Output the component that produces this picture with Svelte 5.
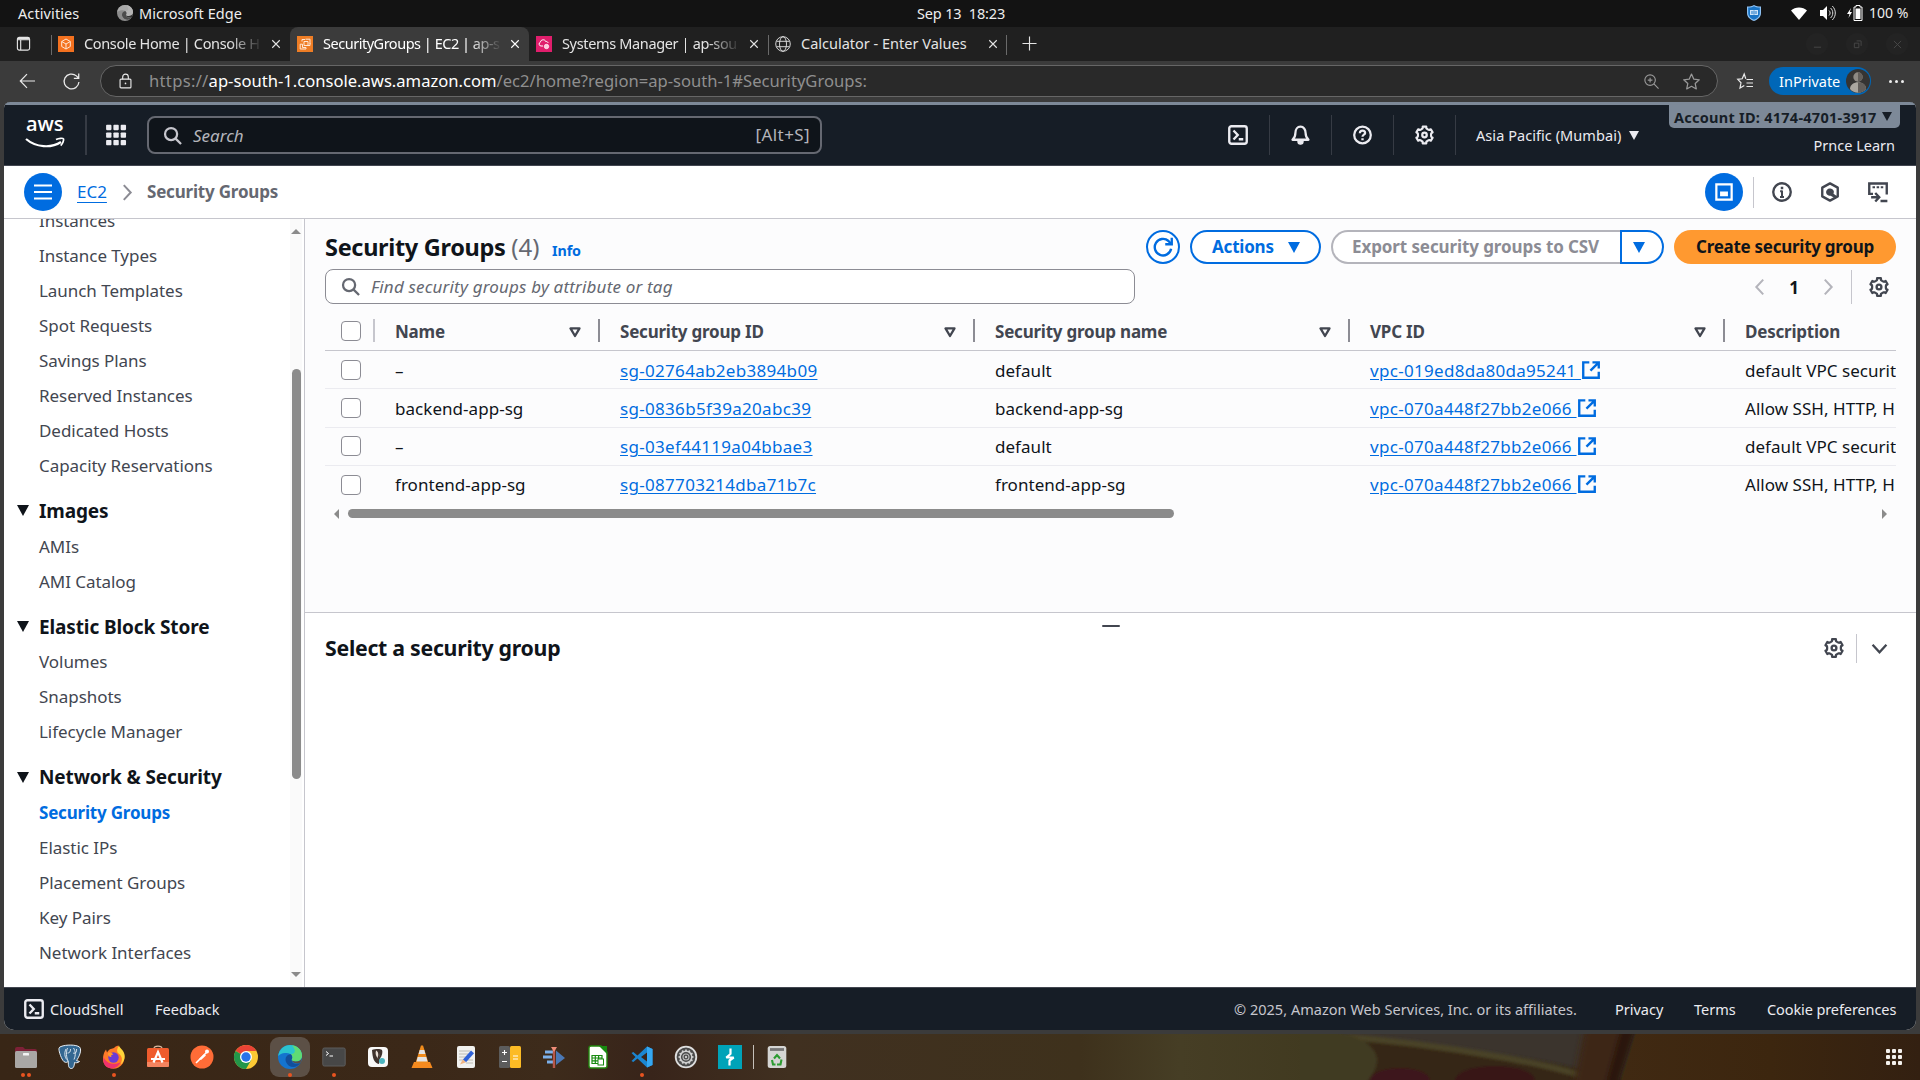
<script>
  const tabs = [
    { kind: 'home', title: 'Console Home | Console H', active: false },
    { kind: 'ec2', title: 'SecurityGroups | EC2 | ap-s', active: true },
    { kind: 'ssm', title: 'Systems Manager | ap-sou', active: false },
    { kind: 'globe', title: 'Calculator - Enter Values', active: false }
  ];
  const nav = [
    { items: ['Instances', 'Instance Types', 'Launch Templates', 'Spot Requests', 'Savings Plans', 'Reserved Instances', 'Dedicated Hosts', 'Capacity Reservations'] },
    { title: 'Images', items: ['AMIs', 'AMI Catalog'] },
    { title: 'Elastic Block Store', items: ['Volumes', 'Snapshots', 'Lifecycle Manager'] },
    { title: 'Network & Security', items: ['Security Groups', 'Elastic IPs', 'Placement Groups', 'Key Pairs', 'Network Interfaces'] }
  ];
  const columns = ['Name', 'Security group ID', 'Security group name', 'VPC ID', 'Description'];
  const rows = [
    { name: '–', id: 'sg-02764ab2eb3894b09', group: 'default', vpc: 'vpc-019ed8da80da95241', desc: 'default VPC securit' },
    { name: 'backend-app-sg', id: 'sg-0836b5f39a20abc39', group: 'backend-app-sg', vpc: 'vpc-070a448f27bb2e066', desc: 'Allow SSH, HTTP, H' },
    { name: '–', id: 'sg-03ef44119a04bbae3', group: 'default', vpc: 'vpc-070a448f27bb2e066', desc: 'default VPC securit' },
    { name: 'frontend-app-sg', id: 'sg-087703214dba71b7c', group: 'frontend-app-sg', vpc: 'vpc-070a448f27bb2e066', desc: 'Allow SSH, HTTP, H' }
  ];
  const dock = [
    { app: 'files', dots: 2 }, { app: 'postgres', dots: 0 }, { app: 'firefox', dots: 1 }, { app: 'software', dots: 0 },
    { app: 'postman', dots: 0 }, { app: 'chrome', dots: 0 }, { app: 'edge', dots: 1 }, { app: 'terminal', dots: 1 },
    { app: 'dbeaver', dots: 0 }, { app: 'vlc', dots: 0 }, { app: 'editor', dots: 0 }, { app: 'calculator', dots: 0 },
    { app: 'umbrello', dots: 0 }, { app: 'calc', dots: 0 }, { app: 'vscode', dots: 1 }, { app: 'settings', dots: 0 }, { app: 'burp', dots: 0 }
  ];

  // Outline of a six-toothed gear in a 16-unit box.
  function gearPoints() {
    const pts = [];
    for (let i = 0; i < 6; i++) {
      const base = i * 60 - 90;
      for (const [off, r] of [[-27, 5.5], [-16, 5.8], [-12, 7.2], [12, 7.2], [16, 5.8], [27, 5.5]]) {
        const a = ((base + off) * Math.PI) / 180;
        pts.push(`${(8 + r * Math.cos(a)).toFixed(2)},${(8 + r * Math.sin(a)).toFixed(2)}`);
      }
    }
    return pts.join(' ');
  }
  const gear = gearPoints();
  const teeth = Array.from({ length: 12 }, (_, i) => i * 30);
</script>

{#snippet icon(name)}
  <svg class="icon" viewBox="0 0 16 16" fill="none" stroke="currentColor" stroke-width="1.9">
    {#if name === 'search'}
      <circle cx="6.8" cy="6.8" r="5.1" /><path d="M10.6 10.6 15.2 15.2" />
    {:else if name === 'shell'}
      <rect x="1" y="1" width="14" height="14" rx="1.8" /><path d="M4.4 4.4 7.8 8 4.4 11.6M8.6 11.4h3.6" />
    {:else if name === 'bell'}
      <path d="M1.300 12h13.400c-1.900-1.500-2.400-2.600-2.400-5.600C12.300 3.300 10.500 1 8 1S3.700 3.300 3.700 6.400C3.700 9.400 3.200 10.500 1.300 12Z" stroke-linejoin="round" /><path d="M5.800 13.500a2.200 2.200 0 0 0 4.400 0Z" fill="currentColor" stroke-width="1" />
    {:else if name === 'help'}
      <circle cx="8" cy="8" r="7" /><path d="M5.800 6.500C5.800 5.100 6.700 4.300 8 4.300s2.200.8 2.200 2C10.200 7.800 8 7.700 8 9.500" /><path d="M7 10.700h2v1.800H7z" fill="currentColor" stroke="none" />
    {:else if name === 'gear'}
      <polygon points={gear} stroke-linejoin="round" stroke-width="1.800" /><circle cx="8" cy="8" r="1.900" />
    {:else if name === 'info'}
      <circle cx="8" cy="8" r="7" /><path d="M8 6.800v5.200M6.500 7.400H8M6.400 11.900h3.200" stroke-width="1.600" /><path d="M7 3.700h2v2H7z" fill="currentColor" stroke="none" />
    {:else if name === 'hex'}
      <path d="M8 1.100 14.200 4.500v7L8 14.900 1.800 11.500v-7Z" stroke-linejoin="round" /><path d="M7.900 5.200a2.900 2.900 0 1 0 .6 5.700l4 2.300 1.200-1.800-2.900-2A2.900 2.900 0 0 0 7.900 5.200Z" fill="currentColor" stroke="none" />
    {:else if name === 'panel'}
      <path d="M1.200 1.200h13.600v13.600H1.200z" stroke-width="2" /><path d="M4.500 7.500h7v4.300h-7z" fill="currentColor" stroke="none" />
    {:else if name === 'tutorial'}
      <path d="M4 9.500H1V1.200h14V10" /><path d="M3.600 4.200h2M6.900 4.200h2M10.200 4.200h2" stroke-width="1.600" /><path d="M2.500 12.200h6M5.800 8.800 9 12.200 5.800 15.600M10 15.200h5.500" />
    {:else if name === 'menu'}
      <path d="M0 2.200h16M0 8h16M0 13.800h16" />
    {:else if name === 'refresh'}
      <path d="M14.500 9.400A6.600 6.600 0 1 1 12.400 3.200L14.500 5.500" /><path d="M9.800 5.800H15V.6" />
    {:else if name === 'external'}
      <path d="M6.500 1.200H1.100v13.700h13.800V9.500M9.300 1.200h5.600v5.500M14.500 1.600 7.500 8.600" stroke-width="2.100" />
    {:else if name === 'left'}
      <path d="M11.500 1 5 8l6.500 7" />
    {:else if name === 'right'}
      <path d="M4.500 1 11 8l-6.500 7" />
    {:else if name === 'down'}
      <path d="M1.500 4.500 8 11.500l6.500-7" stroke-width="2.200" />
    {:else if name === 'apps'}
      {#each [0.8, 6.1, 11.4] as x}{#each [0.6, 6.1, 11.6] as y}<rect {x} {y} width="3.900" height="3.900" rx=".6" fill="currentColor" stroke="none" />{/each}{/each}
    {/if}
  </svg>
{/snippet}

{#snippet chrome(name)}
  <svg class="icon" viewBox="0 0 16 16" fill="none" stroke="currentColor" stroke-width="1.2">
    {#if name === 'back'}<path d="M15.500 8H1M7.500 1.200.8 8l6.700 6.800" />
    {:else if name === 'reload'}<path d="M15 8.500A7 7 0 1 1 12.600 2.700L14.800 5M14.800.5V5h-4.600" />
    {:else if name === 'lock'}<rect x="2.200" y="6" width="11.600" height="9.300" rx="1" /><path d="M5 6V3.700a3 3 0 0 1 6 0V6" /><circle cx="8" cy="10.600" r=".9" fill="currentColor" stroke="none" />
    {:else if name === 'zoom'}<circle cx="6.500" cy="6.500" r="5.600" /><path d="M10.600 10.600 15.500 15.500M4 6.500h5M6.500 4v5" />
    {:else if name === 'star'}<path d="m8 1 2.200 4.800 5.100.6-3.800 3.500 1 5.100L8 12.500 3.500 15l1-5.100L.7 6.400l5.100-.6Z" stroke-linejoin="round" />
    {:else if name === 'favs'}<path d="M8.800 5.800 7.200 1 5.200 5.800.7 6.300 4 9.800 3 15l4.300-2.600M9.500 6.500H16M9.500 10H16M9.500 13.500H16" />
    {:else if name === 'workspace'}<rect x="1.500" y="1.500" width="13" height="13.500" rx="2" /><path d="M1.500 4h13M5 4v11" /><path d="M2 2.700h12" stroke-width="2" />
    {:else if name === 'close'}<path d="m2 2 12 12M14 2 2 14" stroke-width="1.800" />
    {:else if name === 'plus'}<path d="M8 .5v15M.5 8h15" />
    {:else if name === 'home'}<rect width="16" height="16" fill="#f4711f" stroke="none" /><path d="m8 3 4.300 2.500v5L8 13l-4.300-2.500v-5ZM3.700 5.500 8 8l4.300-2.500M8 8v5" stroke="#ffe6d4" stroke-width="1" />
    {:else if name === 'ec2'}<rect width="16" height="16" fill="#ee7d25" stroke="none" /><path d="M8.500 3.200H13v4.500M7 5.500h4v4H7zM5 5.500v-2h3M3.200 8.200h2.300v3.300h3.500V13H3.200zM11 9.500h2V7" stroke="#ffe8d6" stroke-width="1" />
    {:else if name === 'ssm'}<rect width="16" height="16" fill="#e01e6c" stroke="none" /><path d="M7 10H5a2 2 0 0 1-.5-3.900C4.500 3.500 9 2.800 9.700 5.500 11 5.300 12 6 12 7" stroke="#fff" stroke-width="1" /><circle cx="10.500" cy="10.500" r="2.200" fill="#ffc5dc" stroke="#fff" stroke-width=".7" />
    {:else if name === 'globe'}<g stroke-width=".9"><circle cx="8" cy="8" r="7.300" /><ellipse cx="8" cy="8" rx="3.500" ry="7.300" /><path d="M1.500 5.300h13M1.500 10.700h13" /></g>
    {/if}
  </svg>
{/snippet}

{#snippet edgeLogo(mono)}
  <svg class="icon" viewBox="0 0 24 24">
    <circle cx="12" cy="12" r="12" fill={mono ? '#8c8c8c' : '#1474cf'} />
    <path d="M.2 11C1 4.500 6 0 12 0c7 0 12 5 12 10.500 0 4-3 6-6.300 6-2.500 0-4.200-1-4-2 .7-1 .8-1.500.5-2.800C13.500 8.500 10 7.500 7 8 4 8.200 1.500 9.500.2 11Z" fill={mono ? '#aaa' : '#2bc3cf'} />
    <path d="M14 .2C20 1 24 5.500 24 10.500c0 4-3 6-6.300 6-2.500 0-4.200-1-4-2 1.300-2 .8-4-1-5.500 3 0 7-2 1.300-8.800Z" fill={mono ? '#b5b5b5' : '#5fdb74'} />
    <path d="M13 9.300C9 9 6.500 13 8 17c1.200 3 4 5 7.500 5 2.500 0 5-1.500 7-4-4 1.500-9 .8-9-3.500.9-1.200 1.200-3.200-.5-5.200Z" fill={mono ? '#4c4c4c' : '#124f9c'} />
    <path d="M24 12.500c-1 3-3.500 4-6.300 4-2.500 0-4.200-1-4-2 0 3 3.300 4.700 8.800 3.500Z" fill={mono ? '#333' : '#5a4e45'} />
  </svg>
{/snippet}

{#snippet appIcon(name)}
  {#if name === 'edge'}
    {@render edgeLogo(false)}
  {:else}
    <svg class="icon" viewBox="0 0 24 24">
      {#if name === 'files'}
        <path d="M1 4a2 2 0 0 1 2-2h6l2 2h10a2 2 0 0 1 2 2v5H1Z" fill="#7d2137" /><rect x="1" y="6" width="22" height="17" rx="1.500" fill="#a9a7a5" /><rect x="9" y="8" width="6" height="2.500" rx=".5" fill="#f4f4f4" />
      {:else if name === 'postgres'}
        <path d="M3 1.500C8-.5 18-.5 21.500 2c3 3-1 11-3 13.500l3 1c-1.500 1.500-4 1.500-5 1-.3 4-1 6-3.500 6-2.500-.3-2.700-3-2.700-7-2 1.500-4 1-5.300-1C2.500 12 .5 5 1 3.300c.2-1 1-1.500 2-1.800Z" fill="#336791" stroke="#e8eef4" stroke-width="1" /><path d="M9.500 3C8 7 8 12 10.300 16.500M15.500 3c2 3 2.500 7 .5 11.500M8 4c-2.500 5-.5 10 1.500 11M9.500 8c2 0 3-1 3-4M15 8c2 1 4-.5 3.500-4" fill="none" stroke="#e8eef4" stroke-width=".9" />
      {:else if name === 'firefox'}
        <path d="M12 3c1-1 2-2 4.500-2.500-.5 2.500 2 4 4 6 2.500 3 2.500 8.500.3 12C16 26 5 25 1.800 18 .5 15 .6 9 4 4.500l1 3C8 3 10 4 12 3Z" fill="#ff7a29" /><path d="M17 .5c0 2 4.500 4 5.500 9 .8 4-1 8-4 10 3-6 1-9-3-12-1-2 0-5 1.500-7Z" fill="#ffd43a" /><path d="M1.500 12c2 5 8 9 17 5.500C14 26 4 24.500 1.800 18c-.6-2-.6-4-.3-6Z" fill="#f0326d" /><circle cx="11.500" cy="12.500" r="5.200" fill="#6b3bd6" /><path d="M6 8c2-1 4 0 5.500 1.500-2 0-3 1-2 2.500-2 0-4-1.500-3.500-4Z" fill="#ff9a2c" />
      {:else if name === 'software'}
        <path d="M8 3.500C8 .2 16 .2 16 3.500" fill="none" stroke="#d9b9a0" stroke-width="1.200" /><rect x="1" y="3" width="22" height="19" rx="1.500" fill="#ef5c2d" /><path d="M1 17h22v3.500a1.500 1.500 0 0 1-1.500 1.500h-19A1.500 1.500 0 0 1 1 20.500Z" fill="#f4845f" /><path d="M7.500 17.500 12 7l4.500 10.500M5 14h14" fill="none" stroke="#fff" stroke-width="2.200" />
      {:else if name === 'postman'}
        <circle cx="12" cy="12" r="11.500" fill="#ff6c37" /><path d="M6 18l9-9M12.500 11.500 17 7" stroke="#fff" stroke-width="1.600" /><circle cx="17" cy="6.500" r="2" fill="#fff" /><path d="m9 14 5-5 2 1.500-5 4.500Z" fill="#fff" />
      {:else if name === 'chrome'}
        <circle cx="12" cy="12" r="12" fill="#fcc934" /><path d="M12 12 1.600 6A12 12 0 0 1 22.400 6H12Z" fill="#ea4335" /><path d="M12 12 1.600 6A12 12 0 0 0 12 24l5.200-9Z" fill="#23964a" /><circle cx="12" cy="12" r="6" fill="#fff" /><circle cx="12" cy="12" r="4.700" fill="#2873e8" />
      {:else if name === 'terminal'}
        <rect x=".8" y="3" width="22.400" height="18" rx="1.500" fill="#474747" stroke="#5d5d5d" /><path d="m4 6.500 2.500 2L4 10.500M7.500 11h3.500" stroke="#fff" stroke-width="1" fill="none" />
      {:else if name === 'dbeaver'}
        <rect x="2" y="2" width="20" height="20" rx="4" fill="#f8f8f8" /><path d="M6 5c3-1 8-1.500 10 0 1 2 0 6-2 8.500l-1 5.500c-5-1-6.500-6-7-14Z" fill="#40332e" /><path d="M10 5.500c-1 3 0 6 2 8C14.500 11 14 7 10 5.500Z" fill="#e8ded5" /><path d="M11.500 5c1.500 2 2 5 .8 8" fill="none" stroke="#40332e" stroke-width="1.500" /><circle cx="16" cy="16" r="3" fill="#4bb5c0" />
      {:else if name === 'vlc'}
        <path d="M4 17h16l2.500 6h-21Z" fill="#f58a1f" /><path d="M11 .5h2L18.500 18h-13Z" fill="#f08c1d" /><path d="M9.700 5h4.600l1.100 4H8.600ZM7.700 12h8.600l1.200 4.500h-11Z" fill="#e4e4e4" />
      {:else if name === 'editor'}
        <rect x="3" y="1" width="18" height="22" rx="2" fill="#f1f1ef" /><path d="M5 6h11M5 9h9M5 12h8M5 15h14M12 18h7" stroke="#b9b8ae" stroke-width=".9" /><path d="m9 14.500 8-9 3 2.800-8 9Z" fill="#2f62d8" /><path d="m8.800 14.500 3.200 2.800-6 2.200Z" fill="#f0b483" />
      {:else if name === 'calculator'}
        <rect x="1" y="1" width="11" height="22" rx="1.500" fill="#5c5c5c" /><rect x="12" y="1" width="11" height="22" rx="1.500" fill="#fcbb25" /><path d="M4 7.500h5M6.500 5v5M4 16.500h5M15 11h5M15 14h5" stroke="#fff" stroke-width="1.100" />
      {:else if name === 'umbrello'}
        <path d="M3 7h9M1 12h9M5 17h7" stroke="#7cb0ea" stroke-width="3.200" /><path d="M14 5.500 23 13l-9 7Z" fill="#4b78b5" /><path d="M12 3v20" stroke="#b7574a" stroke-width="2.400" /><path d="M9 2h6l-3 5Z" fill="#ef8d79" />
      {:else if name === 'calc'}
        <path d="M5 1h10l6 6v14a2 2 0 0 1-2 2H5a2 2 0 0 1-2-2V3a2 2 0 0 1 2-2Z" fill="#fff" stroke="#22860e" stroke-width="1.400" /><path d="M13 1h8v8Z" fill="#188a10" /><path d="M6 10.500h10v8H6zM6 13h10M6 15.800h10M9.300 10.500v8M12.600 10.500v8" fill="none" stroke="#188a10" stroke-width="1.200" /><rect x="12" y="14" width="5.500" height="6" fill="#fff" stroke="#188a10" />
      {:else if name === 'vscode'}
        <path d="M17 1.500 22.500 4v16L17 22.500 7.500 13.500 3.300 17 1.500 16l4-4-4-4 1.800-1 4.200 3.500ZM17 7.500 11 12l6 4.500Z" fill="#1b86d1" fill-rule="evenodd" /><path d="M17 1.500 22.500 4v16L17 22.500Z" fill="#35a7f1" />
      {:else if name === 'settings'}
        <circle cx="12" cy="12" r="10.300" fill="#4a4a4a" stroke="#dedede" stroke-width="1.800" /><circle cx="12" cy="12" r="5.800" fill="none" stroke="#d0d0d0" stroke-width="1.500" />
        {#each teeth as angle}<path d="M12 4.500v2" stroke="#d0d0d0" stroke-width="1.700" transform="rotate({angle} 12 12)" />{/each}
        <circle cx="12" cy="12" r="3" fill="none" stroke="#b8b8b8" stroke-width="1.100" /><circle cx="12" cy="12" r="1.200" fill="#c8c8c8" />
      {:else if name === 'burp'}
        <path d="M0 0h24v24H0z" fill="#00a3b8" /><path d="M12.500 3.500v5.500L8.300 12.500h7.400L11.500 15.500v5" fill="none" stroke="#fff" stroke-width="2.200" stroke-linejoin="bevel" />
      {:else if name === 'trash'}
        <rect x="2.700" y="1" width="18.600" height="22" rx="2.500" fill="#d5d5d3" /><path d="M5 4.500h14" stroke="#757575" stroke-width="2.800" /><path d="m9 13.500 3-3.500 3 3.500M16.500 14.500l-1 5h-3.500M10.500 19.500H8l-1-4.500" fill="none" stroke="#2c9b31" stroke-width="2.100" />
      {/if}
    </svg>
  {/if}
{/snippet}

<div class="desktop">
  <div class="gnome">
    <span class="activities">Activities</span>
    <span class="edge-mini">{@render edgeLogo(true)}</span>
    <span class="app-name">Microsoft Edge</span>
    <span class="clock">Sep 13&nbsp; 18:23</span>
    <div class="tray">
      <svg class="shield" viewBox="0 0 14 16"><path d="M0 1.500C3 1.500 5 1 7 0c2 1 4 1.500 7 1.500V8c0 4-3 6.500-7 8-4-1.500-7-4-7-8Z" fill="#8fc2f3" /><path d="M1.200 2.500C4 2.500 5.500 2 7 1.200c1.500.8 3 1.300 5.800 1.300V8c0 3.500-2.500 5.500-5.800 6.800C3.700 13.500 1.200 11.500 1.200 8Z" fill="#1a74c5" /><path d="M3 5h8v5H3z" fill="#cfe4f8" /><path d="M5 6v3M7 5.500v4M9 6v3" stroke="#1a74c5" /></svg>
      <svg class="wifi" viewBox="0 0 16 13"><path d="M0 3.500C4-.5 12-.5 16 3.500L8 13Z" fill="#fff" /></svg>
      <svg class="speaker" viewBox="0 0 16 16"><path d="M0 5h3l4-4v14l-4-4H0Z" fill="#fff" /><path d="M9 5.500c1.500 1.500 1.500 3.500 0 5M10.500 3c3 2.500 3 7.500 0 10M12.300 1c4 4 4 10 0 14" fill="none" stroke="#ddd" /></svg>
      <svg class="battery" viewBox="0 0 16 16"><path d="M4 3 0 9h2.500L1.500 13 5 7H2.800Z" fill="#fff" /><path d="M9 .5h4v1.500h2v13.500H7V2h2Z" fill="none" stroke="#fff" /><path d="M8.500 3.500h5V14h-5z" fill="#fff" /></svg>
      <span class="percent">100 %</span>
    </div>
  </div>

  <div class="tabstrip">
    <span class="workspace">{@render chrome('workspace')}</span>
    {#each tabs as tab}
      <div class="tab {tab.kind}" class:active={tab.active}>
        <span class="favicon">{@render chrome(tab.kind)}</span>
        <span class="tab-title">{tab.title}</span>
        <span class="close">{@render chrome('close')}</span>
      </div>
    {/each}
    <span class="new-tab">{@render chrome('plus')}</span>
    <div class="win-buttons">
      <span><svg viewBox="0 0 10 10"><path d="M1 8h8" /></svg></span>
      <span><svg viewBox="0 0 10 10"><path d="M1.500 3.500h5v5h-5zM4 1h5v5.500" /></svg></span>
      <span><svg viewBox="0 0 10 10"><path d="m1 1 8 8M9 1 1 9" /></svg></span>
    </div>
  </div>

  <div class="toolbar">
    <span class="back">{@render chrome('back')}</span>
    <span class="reload">{@render chrome('reload')}</span>
    <div class="omnibox">
      <span class="lock">{@render chrome('lock')}</span>
      <span class="url"><span class="scheme">https://</span><b>ap-south-1.console.aws.amazon.com</b>/ec2/home?region=ap-south-1#SecurityGroups:</span>
      <span class="zoom">{@render chrome('zoom')}</span>
      <span class="star">{@render chrome('star')}</span>
    </div>
    <span class="favs">{@render chrome('favs')}</span>
    <div class="inprivate">
      <span>InPrivate</span>
      <svg class="avatar" viewBox="0 0 24 24"><circle cx="12" cy="12" r="12" fill="#353433" /><circle cx="12" cy="8" r="4.700" fill="#8e8983" /><path d="M4 20c0-9 16-9 16 0-4 5-12 5-16 0Z" fill="#aaa69f" /><path d="M12 3.300a4.700 4.700 0 0 1 0 9.400ZM12 13.300c6 0 8 3 8 6.700-2 2.500-5 3.700-8 3.800Z" fill="#625e5a" /></svg>
    </div>
    <div class="more"><i></i><i></i><i></i></div>
  </div>

  <div class="page">
    <header class="aws-header">
      <div class="logo"><span>aws</span><svg viewBox="0 0 40 12"><path d="M1 2c10 8.500 25 9.500 35 3" fill="none" stroke="#fff" stroke-width="2.200" /><path d="M31 2.500c3-1.500 7-1.500 7.500-.6.500 1-.7 4.600-2.800 6.700" fill="none" stroke="#fff" stroke-width="1.700" /></svg></div>
      <span class="apps">{@render icon('apps')}</span>
      <div class="global-search">{@render icon('search')}<em>Search</em><span>[Alt+S]</span></div>
      <div class="tool">{@render icon('shell')}</div>
      <div class="tool">{@render icon('bell')}</div>
      <div class="tool">{@render icon('help')}</div>
      <div class="tool">{@render icon('gear')}</div>
      <div class="region"><span>Asia Pacific (Mumbai)</span><i class="caret"></i></div>
      <div class="account">
        <div class="account-id"><span>Account ID: 4174-4701-3917</span><i class="caret"></i></div>
        <span class="user">Prnce Learn</span>
      </div>
    </header>

    <div class="crumbs">
      <span class="round">{@render icon('menu')}</span>
      <a href="#ec2">EC2</a>
      <span class="sep">{@render icon('right')}</span>
      <strong>Security Groups</strong>
      <div class="crumb-tools">
        <span class="round">{@render icon('panel')}</span>
        <i class="rule"></i>
        <span class="t1">{@render icon('info')}</span>
        <span class="t2">{@render icon('hex')}</span>
        <span class="t3">{@render icon('tutorial')}</span>
      </div>
    </div>

    <div class="body">
      <aside>
        <nav>
          {#each nav as section}
            {#if section.title}<h3><i class="caret"></i>{section.title}</h3>{/if}
            {#each section.items as item}<a href="#nav" class:current={item === 'Security Groups'}>{item}</a>{/each}
          {/each}
        </nav>
        <div class="vscroll"><i class="up"></i><i class="thumb"></i><i class="dn"></i></div>
      </aside>

      <main>
        <section class="list">
          <div class="title-row">
            <h1>Security Groups <small>(4)</small></h1>
            <span class="info">Info</span>
            <div class="actions">
              <span class="btn refresh">{@render icon('refresh')}</span>
              <span class="btn act"><span>Actions</span><i class="caret"></i></span>
              <span class="split"><span class="btn export"><span>Export security groups to CSV</span></span><span class="btn drop"><i class="caret"></i></span></span>
              <span class="btn create"><span>Create security group</span></span>
            </div>
          </div>
          <div class="filter-row">
            <div class="filter">{@render icon('search')}<em>Find security groups by attribute or tag</em></div>
            <div class="pager">
              <span class="dim">{@render icon('left')}</span><b>1</b><span class="dim">{@render icon('right')}</span><i class="rule"></i><span class="gear">{@render icon('gear')}</span>
            </div>
          </div>
          <div class="table">
            <div class="tr head">
              <div class="check"><i></i></div>
              {#each columns as column}<div class="th"><span>{column}</span><svg viewBox="0 0 12 11"><path d="M1.500 1.400h9L6 9Z" fill="none" stroke="#424650" stroke-width="2.300" stroke-linejoin="round" /></svg></div>{/each}
            </div>
            {#each rows as row}
              <div class="tr">
                <div class="check"><i></i></div>
                <div class="td">{row.name}</div>
                <div class="td"><a href="#sg">{row.id}</a></div>
                <div class="td">{row.group}</div>
                <div class="td"><a href="#vpc">{row.vpc}&nbsp;</a>{@render icon('external')}</div>
                <div class="td">{row.desc}</div>
              </div>
            {/each}
          </div>
          <div class="hscroll"><i class="lt"></i><i class="thumb"></i><i class="rt"></i></div>
        </section>
        <section class="detail">
          <i class="handle"></i>
          <div class="detail-row">
            <h2>Select a security group</h2>
            <span class="gear">{@render icon('gear')}</span><i class="rule"></i><span class="chev">{@render icon('down')}</span>
          </div>
        </section>
      </main>
    </div>

    <footer>
      <span class="shell">{@render icon('shell')}</span><span class="cs">CloudShell</span><span class="fb">Feedback</span>
      <div class="legal"><span class="copy">© 2025, Amazon Web Services, Inc. or its affiliates.</span><span class="privacy">Privacy</span><span class="terms">Terms</span><span class="cookie">Cookie preferences</span></div>
    </footer>
  </div>

  <div class="dock">
    <svg class="wallpaper" viewBox="0 0 620 46" preserveAspectRatio="none">
      <defs>
        <linearGradient id="wood"><stop offset="0" stop-color="#402912" /><stop offset=".5" stop-color="#3c260f" /><stop offset="1" stop-color="#332011" /></linearGradient>
        <filter id="soft" x="-10%" y="-30%" width="120%" height="160%"><feGaussianBlur stdDeviation="1.800" /></filter>
        <filter id="haze" x="-20%" y="-10%" width="140%" height="120%"><feGaussianBlur stdDeviation="3 0" /></filter>
      </defs>
      <path d="M10 0h290v46H10Z" fill="#3b342d" />
      <g filter="url(#soft)">
        <path d="M15 0c60 4 130 14 190 21 50 7 90 17 130 29H15Z" fill="#342613" />
        <path d="M20 1c60 4 130 13 180 22 45 8 60 12 95 22" fill="none" stroke="#494228" stroke-width="6" />
        <ellipse cx="100" cy="46" rx="30" ry="12" fill="#3d171a" />
        <ellipse cx="195" cy="46" rx="40" ry="14" fill="#391218" />
        <path d="M-5-5h30c30 6 50 14 52 30 0 10-5 16-12 26H-5Z" fill="#413a20" />
      </g>
      <g filter="url(#haze)">
        <path d="M284-2h48l-12 50h-46Z" fill="#3d2613" />
        <path d="M320-2h16l-16 50h-14Z" fill="#291710" />
      </g>
      <path d="M336 0h284v46H322Z" fill="url(#wood)" />
    </svg>
    {#each dock as entry}
      <div class="launcher" class:focused={entry.app === 'edge'}>
        {@render appIcon(entry.app)}
        <div class="dots">{#each Array(entry.dots) as _}<i></i>{/each}</div>
      </div>
    {/each}
    <i class="dock-rule"></i>
    <div class="launcher">{@render appIcon('trash')}</div>
    <div class="grid-dots">{#each Array(9) as _}<i></i>{/each}</div>
  </div>
</div>

<style>
  :global(body) { margin: 0; overflow: hidden; }
  .desktop, .desktop * { box-sizing: border-box; }
  .desktop { width: 1920px; height: 1080px; display: flex; flex-direction: column; background: #3b3b3b; font: 17px/22px 'Noto Sans', 'Open Sans', sans-serif; color: #0f141a; white-space: nowrap; overflow: hidden; }
  .icon { display: block; width: 100%; height: 100%; overflow: visible; flex: none; }
  i { display: block; flex: none; }
  .caret { width: 0; height: 0; border: 6px solid transparent; border-top: 11px solid currentColor; border-bottom: 0; }

  .gnome { height: 27px; flex: none; background: #131313; color: #eee; display: grid; grid-template-columns: 117px 22px 778px 110px 1fr; align-items: center; font-size: 14.500px; padding-bottom: 1px; line-height: 20px; }
  .activities { padding-left: 18px; letter-spacing: .1px; }
  .app-name { letter-spacing: .060px; }
  .edge-mini { width: 16px; height: 16px; }
  .clock { letter-spacing: -.150px; }
  .tray { display: flex; align-items: center; padding-left: 720px; }
  .shield { width: 14px; height: 16px; margin-right: 30px; }
  .wifi { width: 16px; height: 13px; margin-right: 13px; }
  .speaker { width: 16px; height: 16px; margin-right: 11px; }
  .battery { width: 16px; height: 16px; margin-right: 6px; }
  .percent { font-size: 14px; }

  .tabstrip { height: 34px; flex: none; background: #202020; display: flex; align-items: center; color: #e4e4e4; font-size: 14.500px; }
  .workspace { width: 15px; height: 15px; margin: 0 20px 1px 16px; }
  .tab { width: 239px; height: 34px; display: flex; align-items: center; position: relative; padding-bottom: 1px; }
  .tab.home::before, .tab.globe::before, .tab.globe::after { content: ''; position: absolute; left: 0; top: 8px; width: 1px; height: 20px; background: #6a6a6a; }
  .tab.globe::after { left: auto; right: 0; }
  .tab.active { background: #3b3b3b; border-radius: 8px 8px 0 0; color: #fff; }
  .favicon { width: 16px; height: 16px; margin-left: 7px; margin-right: 10px; }
  .tab-title { width: 179px; padding-bottom: 2px; -webkit-mask-image: linear-gradient(90deg, #000 145px, transparent 179px); mask-image: linear-gradient(90deg, #000 145px, transparent 179px); letter-spacing: -.350px; }
  .active .tab-title { letter-spacing: -.480px; }
  .globe .tab-title { letter-spacing: 0; -webkit-mask-image: none; mask-image: none; }
  .close { width: 10px; height: 10px; margin-left: 8px; }
  .new-tab { width: 15px; height: 15px; margin: 0 0 1px 15px; }
  .win-buttons { margin-left: auto; margin-right: 12px; display: flex; gap: 18px; }
  .win-buttons span { width: 22px; height: 22px; border-radius: 50%; background: #232323; display: grid; place-items: center; }
  .win-buttons svg { width: 9px; height: 9px; fill: none; stroke: #4a4a4a; }

  .toolbar { height: 40px; flex: none; display: flex; align-items: center; color: #eaeaea; }
  .back { width: 17px; height: 16px; margin-left: 19px; }
  .reload { width: 17px; height: 17px; margin-left: 27px; }
  .omnibox { width: 1618px; height: 32px; margin-left: 20px; border: 1px solid #666; border-radius: 16px; background: #292929; display: flex; align-items: center; }
  .lock { width: 15px; height: 16px; margin-left: 17px; }
  .url { width: 1495px; margin-left: 16px; font-size: 16.600px; color: #8f8f8f; }
  .url b { color: #fff; font-weight: 400; }
  .scheme { letter-spacing: .3px; }
  .zoom { width: 15px; height: 15px; color: #999; }
  .star { width: 17px; height: 17px; margin-left: 24px; color: #999; }
  .favs { width: 16px; height: 16px; margin-left: 19px; }
  .inprivate { width: 102px; height: 28px; margin-left: 16px; border-radius: 14px; background: #0067b8; display: flex; align-items: center; padding: 0 0 1px 10px; font-size: 14.500px; color: #fff; position: relative; }
  .avatar { width: 24px; height: 24px; position: absolute; right: 1px; top: 2px; }
  .more { display: flex; gap: 3px; margin-left: 18px; }
  .more i { width: 3px; height: 3px; border-radius: 50%; background: #eee; }

  .page { width: 1912px; height: 928px; margin: 1px 0 4px 4px; flex: none; border-radius: 6px 6px 10px 10px; overflow: hidden; display: flex; flex-direction: column; background: #fff; }
  .aws-header { height: 64px; flex: none; background: #161d26; border-top: 3px solid #7d8998; border-bottom: 1px solid #424650; display: flex; align-items: center; color: #ebebf0; }
  .logo { width: 83px; height: 40px; padding: 0 0 0 21px; border-right: 2px solid #363b44; display: flex; flex-direction: column; color: #fff; }
  .logo span { font: 600 20px/22px 'Open Sans', sans-serif; letter-spacing: -.1px; padding-left: 1px; margin-top: -2px; }
  .logo svg { width: 40px; height: 12px; margin-top: 2px; }
  .apps { width: 22px; height: 22px; margin-left: 18px; }
  .global-search { width: 675px; height: 38px; margin-left: 20px; border: 2px solid #656871; border-radius: 8px; background: #0f141a; display: flex; align-items: center; padding: 0 10px 0 14px; color: #b4b4bb; }
  .global-search em { padding-top: 1px; }
  .global-search .icon { width: 19px; height: 19px; margin-right: 11px; color: #c6c6cd; }
  .global-search span { margin-left: auto; letter-spacing: .4px; }
  .tool { width: 62px; height: 40px; border-right: 1px solid #363b44; padding: 10px 21px; }
  .tool:nth-of-type(3) { margin-left: 385px; width: 63px; }
  .region { width: 214px; display: flex; align-items: center; padding: 0 0 0 20px; font-size: 14.500px; line-height: 20px; gap: 8px; letter-spacing: .060px; }
  .region .caret { border-width: 9px 5px 0; }
  .account { width: 230px; align-self: stretch; display: flex; flex-direction: column; align-items: flex-end; }
  .account-id { width: 231px; height: 23px; background: #7d8998; border-radius: 0 0 5px 5px; color: #161d26; display: flex; align-items: center; font-size: 14.500px; font-weight: 700; letter-spacing: .260px; gap: 5px; padding: 0 0 0 5px; }
  .account-id .caret { border-width: 9px 5px 0; }
  .user { font-size: 14.500px; margin: 6px 5px 0 0; }

  .crumbs { height: 53px; flex: none; border-bottom: 1px solid #c6c6cd; display: flex; align-items: center; padding-left: 20px; color: #656871; }
  .round { width: 38px; height: 38px; border-radius: 50%; background: #006ce0; color: #fff; padding: 10px; }
  .crumbs a { width: 30px; margin-left: 15px; color: #006ce0; text-underline-offset: 4px; }
  .sep { width: 17px; height: 17px; margin: 0 11px 0 12px; color: #8c8c94; }
  .crumbs strong { font-weight: 700; letter-spacing: -.2px; }
  .crumb-tools { margin-left: auto; display: flex; align-items: center; color: #424650; }
  .rule { width: 1px; background: #c6c6cd; }
  .crumb-tools .rule { height: 31px; margin: 0 18px 0 10px; }
  .t1, .t2, .t3 { width: 20px; height: 20px; margin-right: 28px; }

  .body { flex: 1; min-height: 0; display: flex; }
  aside { width: 301px; border-right: 1px solid #c6c6cd; display: flex; overflow: hidden; }
  nav { width: 286px; margin-top: -16px; }
  nav a { display: block; height: 35px; line-height: 35px; padding-left: 35px; color: #424650; text-decoration: none; letter-spacing: -.05px; }
  nav a.current { color: #006ce0; font-weight: 700; letter-spacing: -.2px; }
  nav h3 { height: 45.700px; margin: 0; padding: 10px 0 0 13px; display: flex; align-items: center; font-size: 19px; font-weight: 700; gap: 10px; letter-spacing: -.12px; }
  nav h3 .caret { border-width: 11px 6px 0; }
  .vscroll { width: 12px; background: #fafafa; display: flex; flex-direction: column; align-items: center; padding-top: 10px; }
  .vscroll .up { border: 5px solid transparent; border-top: 0; border-bottom: 5px solid #8b8b8b; }
  .vscroll .thumb { width: 9px; height: 410px; background: #8b8b8b; border-radius: 5px; margin-top: 135px; }
  .vscroll .dn { border: 5px solid transparent; border-bottom: 0; border-top: 5px solid #8b8b8b; margin-top: 193px; }

  main { width: 1611px; display: flex; flex-direction: column; }
  .list { height: 394px; background: #fcfcfd; border-bottom: 1px solid #c6c6cd; padding: 11px 20px 0; }
  .title-row { height: 34px; display: flex; align-items: center; }
  h1 { width: 227px; margin: 0; font-size: 23.500px; font-weight: 700; letter-spacing: -.320px; }
  h1 small { font-size: 24px; font-weight: 400; color: #656871; letter-spacing: 0; }
  .info { font-size: 14.300px; font-weight: 700; color: #006ce0; margin-top: 7px; letter-spacing: -.1px; }
  .actions { margin-left: auto; display: flex; }
  .btn { height: 34px; border: 2px solid #006ce0; border-radius: 17px; background: #fff; color: #006ce0; display: flex; align-items: center; font-weight: 700; letter-spacing: -.2px; }
  .refresh { width: 34px; padding: 5px; margin-right: 10px; }
  .act { width: 131px; padding-left: 20px; gap: 14px; margin-right: 10px; }
  .split { display: flex; margin-right: 10px; }
  .export { width: 289px; border-color: #b4b4bb; border-right: 0; border-radius: 17px 0 0 17px; color: #8c8c94; padding-left: 19px; letter-spacing: -.100px; }
  .drop { width: 44px; border-radius: 0 17px 17px 0; padding-left: 11px; }
  .create { width: 222px; background: #ff9930; border: 0; color: #0f141a; justify-content: center; letter-spacing: -.270px; }
  .filter-row { height: 35px; margin-top: 5px; display: flex; justify-content: space-between; }
  .filter { width: 810px; height: 35px; border: 1px solid #8c8c94; border-radius: 8px; background: #fff; display: flex; align-items: center; padding-left: 15px; color: #656871; letter-spacing: .180px; }
  .filter em { padding-top: 1px; }
  .filter .icon { width: 19px; height: 19px; margin-right: 11px; }
  .pager { display: flex; align-items: center; }
  .dim { width: 17px; height: 18px; color: #b4b4bb; }
  .pager b { width: 52px; text-align: center; font-weight: 700; padding-top: 2px; }
  .pager .rule { height: 34px; margin-left: 14px; }
  .gear { width: 20px; height: 20px; color: #424650; }
  .pager .gear { margin: 0 7px 0 17px; }
  .table { height: 197px; margin-top: 7px; }
  .tr { display: grid; grid-template-columns: 50px 225px 375px 375px 375px 171px; height: 38.400px; align-items: center; border-bottom: 1px solid #ebebf0; }
  .tr:last-child { border-bottom: 0; }
  .tr.head { height: 40px; border-color: #c6c6cd; color: #424650; }
  .check { padding-left: 16px; }
  .check i { width: 20px; height: 20px; border: 1px solid #8c8c94; border-radius: 4px; background: #fff; }
  .tr:last-child .check { padding-bottom: 1px; }
  .head .check { height: 23px; padding-top: 2px; border-right: 2px solid #c6c6cd; }
  .th { height: 23px; display: flex; align-items: center; justify-content: space-between; padding: 3px 17px 0 20px; border-right: 2px solid #8c8c94; font-weight: 700; letter-spacing: -.220px; }
  .th:last-child { border: 0; }
  .th:last-child svg { display: none; }
  .th svg { width: 12px; height: 11px; }
  .td { display: flex; align-items: center; padding: 2px 0 0 20px; letter-spacing: .040px; }
  .tr:last-child .td { padding-top: 0; }
  .td:last-child { overflow: hidden; }
  .td a { color: #006ce0; text-underline-offset: 2px; letter-spacing: .310px; }
  .td .icon { width: 18px; height: 18px; color: #006ce0; margin: 0 0 2px 1px; }
  .hscroll { display: flex; align-items: center; height: 9px; margin-top: 1px; padding-left: 9px; }
  .lt { border: 5px solid transparent; border-left: 0; border-right: 5px solid #8b8b8b; }
  .rt { border: 5px solid transparent; border-right: 0; border-left: 5px solid #8b8b8b; margin-left: 708px; }
  .hscroll .thumb { width: 826px; height: 9px; background: #8b8b8b; border-radius: 5px; margin-left: 9px; }
  .detail { flex: 1; padding: 12px 20px 0; }
  .handle { width: 18px; height: 2px; background: #424650; border-radius: 1px; margin: 0 auto; }
  .detail-row { display: flex; align-items: center; height: 30px; margin-top: 6px; }
  h2 { margin: 0; font-size: 21.300px; font-weight: 700; flex: 1; letter-spacing: -.280px; }
  .detail .rule { height: 29px; margin: 0 14px 0 12px; }
  .chev { width: 17px; height: 17px; margin-right: 8px; color: #424650; }

  footer { height: 43px; flex: none; background: #161d26; border-top: 1px solid #424650; color: #ebebf0; display: flex; align-items: center; font-size: 14.500px; line-height: 20px; padding: 0 0 1px 20px; }
  .shell { width: 20px; height: 20px; margin-right: 6px; }
  .cs { width: 105px; letter-spacing: .15px; }
  .legal { margin-left: auto; display: grid; grid-template-columns: 381px 79px 73px 149px; }
  .copy { color: #c6c6cd; letter-spacing: .03px; }
  .cookie { letter-spacing: -.1px; }

  .dock { height: 46px; flex: none; display: flex; align-items: center; padding-left: 4px; position: relative; background:
    linear-gradient(90deg, #382616 0, #3b2818 420px, #3d2b1b 550px, #38241a 650px, #403020 790px, #3e311c 1080px, #463e25 1180px, #413a20 1310px); }
  .wallpaper { position: absolute; left: 1300px; top: 0; width: 620px; height: 46px; }
  .launcher { width: 44px; height: 46px; padding: 11px 10px; position: relative; }
  .launcher .icon { width: 24px; height: 24px; position: relative; }
  .focused::before { content: ''; position: absolute; left: 2px; top: 3px; width: 40px; height: 40px; border-radius: 9px; background: #5c5046; }
  .dots { position: absolute; left: 0; right: 0; bottom: 3px; display: flex; justify-content: center; gap: 2px; }
  .dots i { width: 4px; height: 4px; border-radius: 50%; background: #e95420; }
  .dock-rule { width: 1px; height: 24px; background: #c5c0b9; margin: 0 1px; }
  .grid-dots { position: relative; margin-left: auto; margin-right: 18px; display: grid; grid-template-columns: repeat(3, 4px); gap: 2px; }
  .grid-dots i { width: 4px; height: 4px; border-radius: 1px; background: #f4f1ed; }
</style>
